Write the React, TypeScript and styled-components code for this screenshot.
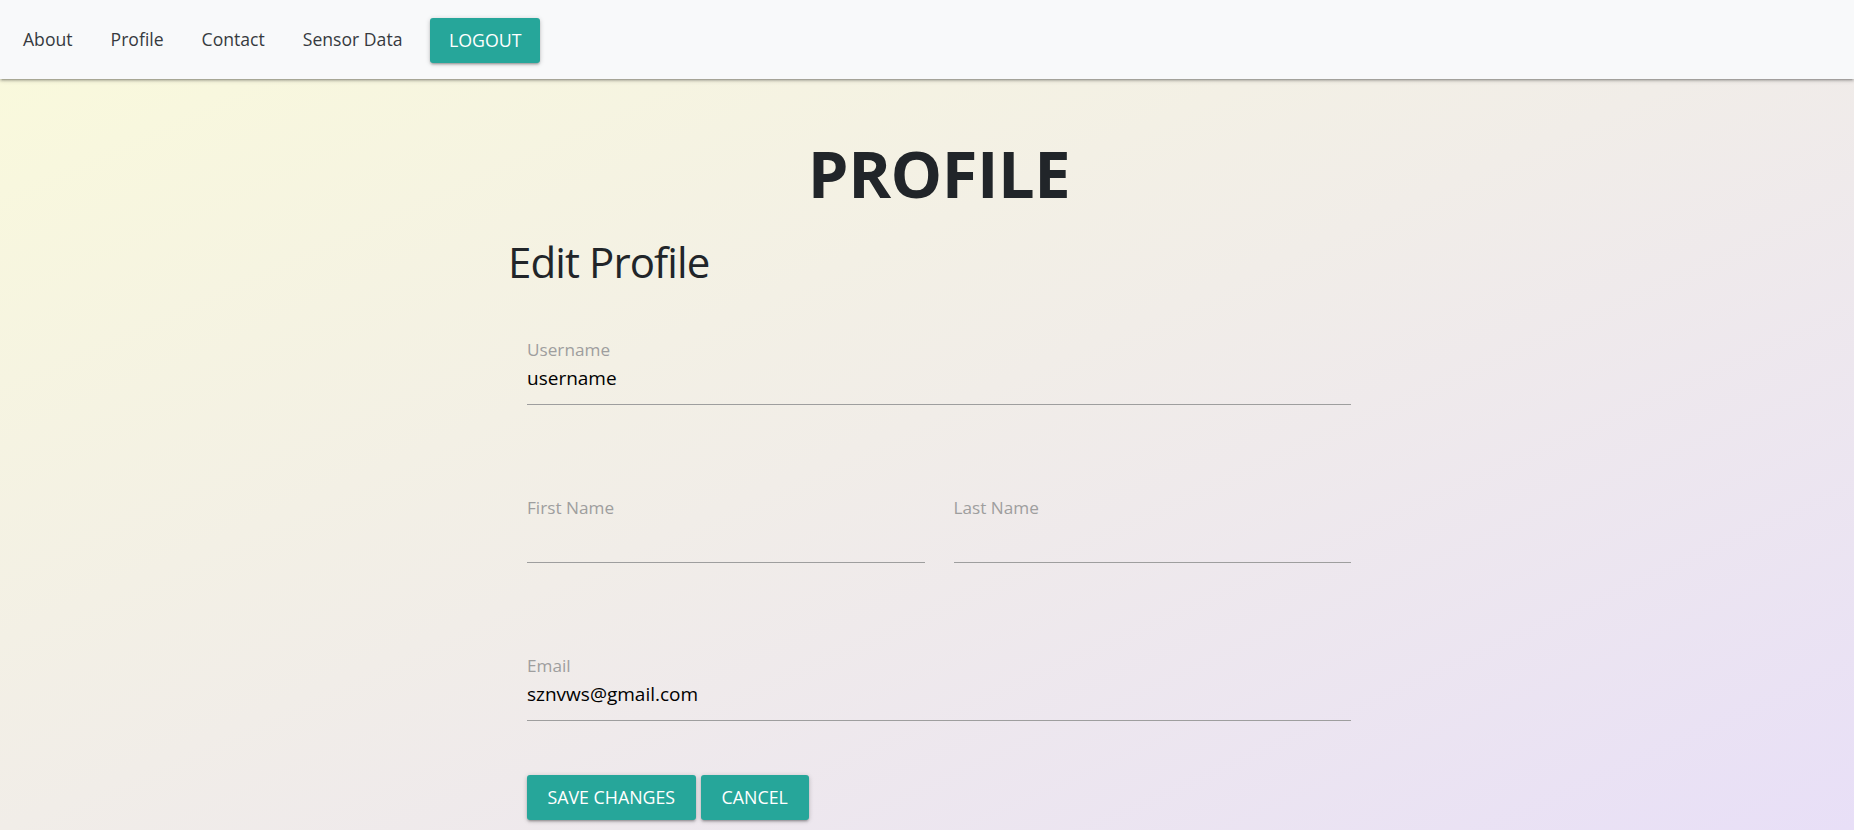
import React from "react";
import styled, { createGlobalStyle } from "styled-components";

const GlobalStyle = createGlobalStyle`
  html, body {
    margin: 0;
    padding: 0;
  }
  body {
    font-family: "Open Sans", "Noto Sans", sans-serif;
    color: #212529;
  }
  *, *::before, *::after {
    box-sizing: border-box;
  }
`;

const Page = styled.div`
  min-height: 100vh;
  background: linear-gradient(to bottom right, #fafadb 0%, #f1ede8 50%, #e8dff7 100%);
`;

const NavBar = styled.nav`
  position: relative;
  z-index: 1;
  height: 79px;
  display: flex;
  align-items: center;
  padding-left: 23px;
  background: #f8f9fa;
  box-shadow: 0 2px 2px 0 rgba(0, 0, 0, 0.14), 0 3px 1px -2px rgba(0, 0, 0, 0.12),
    0 1px 5px 0 rgba(0, 0, 0, 0.2);
`;

const NavList = styled.ul`
  display: flex;
  align-items: center;
  gap: 38px;
  list-style: none;
  margin: 0;
  padding: 0;
`;

const NavLink = styled.a`
  display: block;
  font-size: 17.6px;
  line-height: 1;
  color: #363a3e;
  text-decoration: none;
  cursor: pointer;
`;

const Button = styled.button<{ $offset?: number; $pad?: number }>`
  height: 45px;
  margin-left: ${(p) => p.$offset ?? 0}px;
  margin-top: ${(p) => (p.$offset ? 2 : 0)}px;
  padding: 0 ${(p) => p.$pad ?? 20}px;
  border: none;
  border-radius: 3px;
  background: #26a69a;
  color: #ffffff;
  font-family: inherit;
  font-size: 17.8px;
  line-height: 45px;
  text-transform: uppercase;
  cursor: pointer;
  box-shadow: 0 2px 2px 0 rgba(0, 0, 0, 0.14), 0 3px 1px -2px rgba(0, 0, 0, 0.12),
    0 1px 5px 0 rgba(0, 0, 0, 0.2);
`;

const Main = styled.main`
  width: 858px;
  margin-left: calc(50% - 417px);
  padding-top: 62px;
`;

const Title = styled.h1`
  margin: 0;
  text-align: center;
  font-size: 65px;
  font-weight: 700;
  line-height: 1;
  letter-spacing: -0.5px;
  color: #212529;
`;

const SubTitle = styled.h2`
  margin: 35px 0 0 -2px;
  font-size: 42px;
  font-weight: 400;
  line-height: 1;
  letter-spacing: -0.9px;
  color: #212529;
`;

const Form = styled.form`
  display: flex;
  flex-direction: column;
  gap: 94px;
  margin-top: 58px;
  padding: 0 17px;
`;

const Field = styled.div`
  position: relative;
  padding-top: 11px;
`;

const Label = styled.label`
  position: absolute;
  top: 0;
  left: 0;
  font-size: 17.2px;
  line-height: 1;
  color: #9e9e9e;
`;

const Input = styled.input`
  display: block;
  width: 100%;
  height: 53px;
  margin: 0;
  padding: 0;
  border: none;
  border-bottom: 1px solid #9e9e9e;
  border-radius: 0;
  background: transparent;
  font-family: inherit;
  font-size: 19px;
  color: #000000;
  outline: none;
`;

const NameRow = styled.div`
  display: grid;
  grid-template-columns: 1fr 1fr;
  column-gap: 29px;
`;

const Actions = styled.div`
  display: flex;
  gap: 5px;
  margin-top: 54px;
  padding-left: 17px;
`;

type FieldProps = { id: string; label: string; value?: string; type?: string };

const TextField = ({ id, label, value, type = "text" }: FieldProps) => (
  <Field>
    <Label htmlFor={id}>{label}</Label>
    <Input id={id} type={type} defaultValue={value} />
  </Field>
);

export default function App() {
  const links = ["About", "Profile", "Contact", "Sensor Data"];
  return (
    <>
      <GlobalStyle />
      <Page>
        <NavBar>
          <NavList>
            {links.map((l) => (
              <li key={l}>
                <NavLink>{l}</NavLink>
              </li>
            ))}
          </NavList>
          <Button $offset={28} $pad={18.5}>
            Logout
          </Button>
        </NavBar>
        <Main>
          <Title>PROFILE</Title>
          <SubTitle>Edit Profile</SubTitle>
          <Form onSubmit={(e) => e.preventDefault()}>
            <TextField id="username" label="Username" value="username" />
            <NameRow>
              <TextField id="first" label="First Name" />
              <TextField id="last" label="Last Name" />
            </NameRow>
            <TextField id="email" label="Email" value="sznvws@gmail.com" type="email" />
          </Form>
          <Actions>
            <Button type="button" $pad={20.5}>
              Save Changes
            </Button>
            <Button type="button" $pad={21}>
              Cancel
            </Button>
          </Actions>
        </Main>
      </Page>
    </>
  );
}
